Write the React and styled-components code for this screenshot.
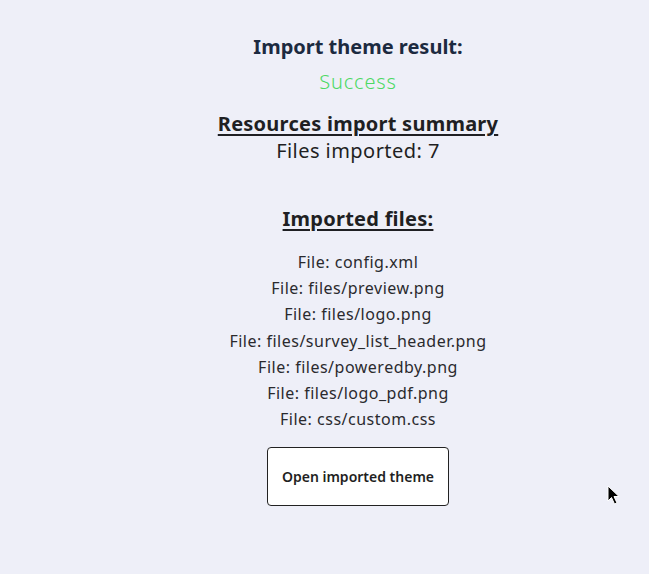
import React from 'react';
import styled, { createGlobalStyle } from 'styled-components';

const GlobalStyle = createGlobalStyle`
  html, body {
    margin: 0;
    padding: 0;
    background: #eeeff8;
  }
  body {
    font-family: "Noto Sans", "Open Sans", sans-serif;
  }
`;

const files = [
  'config.xml',
  'files/preview.png',
  'files/logo.png',
  'files/survey_list_header.png',
  'files/poweredby.png',
  'files/logo_pdf.png',
  'css/custom.css',
];

function App() {
  return (
    <Page>
      <GlobalStyle />
      <Result>
        <Title>Import theme result:</Title>
        <Status>Success</Status>
        <Heading>Resources import summary</Heading>
        <Count>Files imported: 7</Count>
        <Heading $spaced>Imported files:</Heading>
        <FileList>
          {files.map((f) => (
            <FileRow key={f}>File: {f}</FileRow>
          ))}
        </FileList>
        <OpenButton>Open imported theme</OpenButton>
      </Result>
      <Cursor width="14" height="22" viewBox="0 0 14 22">
        <path d="M1 1 L1 16 L4.5 12.5 L7.5 19 L10 18 L7 11.5 L12 11.5 Z" fill="#000" stroke="#fff" strokeWidth="1" />
      </Cursor>
    </Page>
  );
}

const Page = styled.div`
  position: relative;
  min-height: 574px;
  padding-left: 67px;
  padding-top: 33px;
  box-sizing: border-box;
`;

const Result = styled.div`
  display: flex;
  flex-direction: column;
  align-items: center;
  text-align: center;
`;

const Title = styled.div`
  font-size: 20px;
  font-weight: 700;
  line-height: 28px;
  color: #1c2a40;
`;

const Status = styled.div`
  margin-top: 7px;
  font-size: 20px;
  font-weight: 300;
  line-height: 28px;
  letter-spacing: 0.8px;
  color: #4cd964;
`;

const Heading = styled.div`
  margin-top: ${(p) => (p.$spaced ? '41px' : '14px')};
  font-size: 20px;
  font-weight: 700;
  line-height: 28px;
  letter-spacing: 0.25px;
  color: #1f1f23;
  text-decoration: underline;
  text-underline-offset: 3px;
`;

const Count = styled.div`
  font-size: 20px;
  line-height: 26px;
  letter-spacing: 0.45px;
  color: #1f1f23;
`;

const FileList = styled.div`
  margin-top: 16px;
  display: flex;
  flex-direction: column;
`;

const FileRow = styled.div`
  font-size: 16px;
  line-height: 26.2px;
  letter-spacing: 0.5px;
  color: #2a2a2e;
`;

const OpenButton = styled.button`
  margin-top: 15px;
  width: 182px;
  height: 59px;
  background: #fff;
  border: 1px solid #222;
  border-radius: 4px;
  font-family: inherit;
  font-size: 14px;
  font-weight: 600;
  color: #1f1f23;
  cursor: pointer;
`;

const Cursor = styled.svg`
  position: absolute;
  left: 607px;
  top: 485px;
`;

export default App;
